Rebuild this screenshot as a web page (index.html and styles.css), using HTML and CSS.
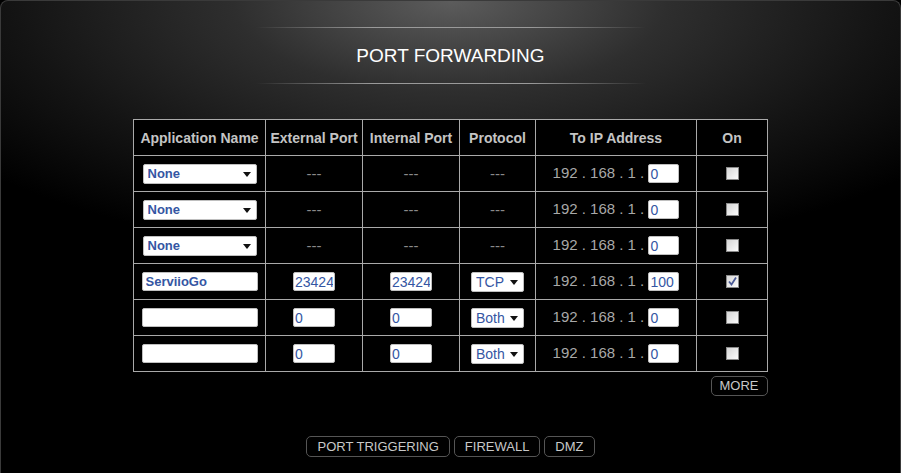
FILE: index.html
```html
<!DOCTYPE html>
<html>
<head>
<meta charset="utf-8">
<title>Port Forwarding</title>
<link rel="stylesheet" href="styles.css">
</head>
<body>
<div class="panel">
  <div class="line"></div>
  <div class="title">PORT FORWARDING</div>
  <div class="line"></div>

  <table class="fwd">
    <tr>
      <th class="c1">Application Name</th>
      <th class="c2">External Port</th>
      <th class="c3">Internal Port</th>
      <th class="c4">Protocol</th>
      <th class="c5">To IP Address</th>
      <th class="c6">On</th>
    </tr>
    <tr>
      <td><span class="sel app"><select><option>None</option></select></span></td>
      <td class="dash">---</td>
      <td class="dash">---</td>
      <td class="dash">---</td>
      <td class="ip">192 . 168 . 1 . <input class="oct" type="text" value="0"></td>
      <td><span class="chk"></span></td>
    </tr>
    <tr>
      <td><span class="sel app"><select><option>None</option></select></span></td>
      <td class="dash">---</td>
      <td class="dash">---</td>
      <td class="dash">---</td>
      <td class="ip">192 . 168 . 1 . <input class="oct" type="text" value="0"></td>
      <td><span class="chk"></span></td>
    </tr>
    <tr>
      <td><span class="sel app"><select><option>None</option></select></span></td>
      <td class="dash">---</td>
      <td class="dash">---</td>
      <td class="dash">---</td>
      <td class="ip">192 . 168 . 1 . <input class="oct" type="text" value="0"></td>
      <td><span class="chk"></span></td>
    </tr>
    <tr>
      <td><input class="name" type="text" value="ServiioGo"></td>
      <td><input class="port" type="text" value="23424"></td>
      <td><input class="port" type="text" value="23424"></td>
      <td><span class="sel proto"><select><option>TCP</option></select></span></td>
      <td class="ip">192 . 168 . 1 . <input class="oct" type="text" value="100"></td>
      <td><span class="chk on"><svg width="11" height="11" viewBox="0 0 11 11"><path d="M2 5.5 L4.5 8.5 L9 1.5" fill="none" stroke="#4a5a96" stroke-width="1.8"/></svg></span></td>
    </tr>
    <tr>
      <td><input class="name" type="text" value=""></td>
      <td><input class="port" type="text" value="0"></td>
      <td><input class="port" type="text" value="0"></td>
      <td><span class="sel proto"><select><option>Both</option></select></span></td>
      <td class="ip">192 . 168 . 1 . <input class="oct" type="text" value="0"></td>
      <td><span class="chk"></span></td>
    </tr>
    <tr>
      <td><input class="name" type="text" value=""></td>
      <td><input class="port" type="text" value="0"></td>
      <td><input class="port" type="text" value="0"></td>
      <td><span class="sel proto"><select><option>Both</option></select></span></td>
      <td class="ip">192 . 168 . 1 . <input class="oct" type="text" value="0"></td>
      <td><span class="chk"></span></td>
    </tr>
  </table>

  <div class="more-row"><a class="btn more">MORE</a></div>

  <div class="links">
    <a class="btn">PORT TRIGGERING</a>
    <a class="btn">FIREWALL</a>
    <a class="btn">DMZ</a>
  </div>
</div>
</body>
</html>
```

FILE: styles.css
```css
html, body{
margin: 0;
padding: 0;
background: #000;
}
body{
font-family: "Liberation Sans", Arial, sans-serif;
color: #ccc;
}
.panel{
box-sizing: border-box;
width: 901px;
height: 473px;
padding-top: 26px;
border: 1px solid #3a3a3a;
border-bottom: none;
border-radius: 8px 8px 0 0;
background: radial-gradient(ellipse 620px 260px at 50% 0, #5c5c5c 0%, #2e2e2e 35%, #141414 70%, #000 100%);
}
.line{
width: 390px;
height: 1px;
margin: 0 auto;
background: linear-gradient(to right, rgba(150,150,150,0), #9a9a9a 30%, #9a9a9a 70%, rgba(150,150,150,0));
}
.title{
height: 55px;
line-height: 55px;
text-align: center;
font-size: 19px;
color: #fff;
}
.fwd{
margin: 35px auto 0;
border-collapse: collapse;
background: #000;
}
.fwd th, .fwd td{
border: 1px solid #a9a9a9;
height: 35px;
padding: 0;
text-align: center;
font-size: 15px;
}
.fwd th{
font-size: 14px;
font-weight: bold;
color: #c4c4c4;
}
.c1{ width: 131px; }
.c2{ width: 96px; }
.c3{ width: 96px; }
.c4{ width: 75px; }
.c5{ width: 160px; }
.c6{ width: 70px; }
.dash{
color: #8a8a8a;
}
.ip{
color: #a8a8a8;
}
input, select{
font-family: "Liberation Sans", Arial, sans-serif;
color: #3556a3;
background: #fff;
border: 1px solid #bfbfbf;
border-radius: 2px;
box-sizing: border-box;
outline: none;
}
.oct{
width: 31px;
height: 19px;
padding: 0 1px;
font-size: 14px;
vertical-align: middle;
}
.port{
width: 42px;
height: 19px;
padding: 0 1px;
font-size: 14px;
}
.name{
width: 116px;
height: 19px;
padding: 0 3px;
font-size: 13px;
font-weight: bold;
}
.sel{
position: relative;
display: inline-block;
vertical-align: middle;
}
.sel select{
-webkit-appearance: none;
appearance: none;
height: 20px;
padding: 0 4px;
font-size: 13px;
font-weight: bold;
}
.app select{
width: 114px;
}
.proto select{
width: 53px;
font-weight: normal;
font-size: 14px;
}
.sel::after{
content: "";
position: absolute;
right: 6px;
top: 8px;
border-left: 4px solid transparent;
border-right: 4px solid transparent;
border-top: 5px solid #111;
pointer-events: none;
}
.chk{
display: block;
box-sizing: border-box;
width: 13px;
height: 13px;
margin: 0 auto;
border: 1px solid #8a8a8a;
background: linear-gradient(135deg, #d6d6d6, #fbfbfb);
}
.chk svg{
display: block;
}
.more-row{
width: 634px;
margin: 4px auto 0;
text-align: right;
}
.btn{
display: inline-block;
box-sizing: border-box;
height: 20px;
line-height: 18px;
padding: 0 8px;
border: 1px solid #555;
border-radius: 5px;
font-size: 13px;
color: #c8c8c8;
background: #000;
}
.links{
margin-top: 40px;
text-align: center;
font-size: 0;
}
.links .btn{
height: 21px;
line-height: 19px;
margin: 0 2px;
padding: 0 10px;
}
```
